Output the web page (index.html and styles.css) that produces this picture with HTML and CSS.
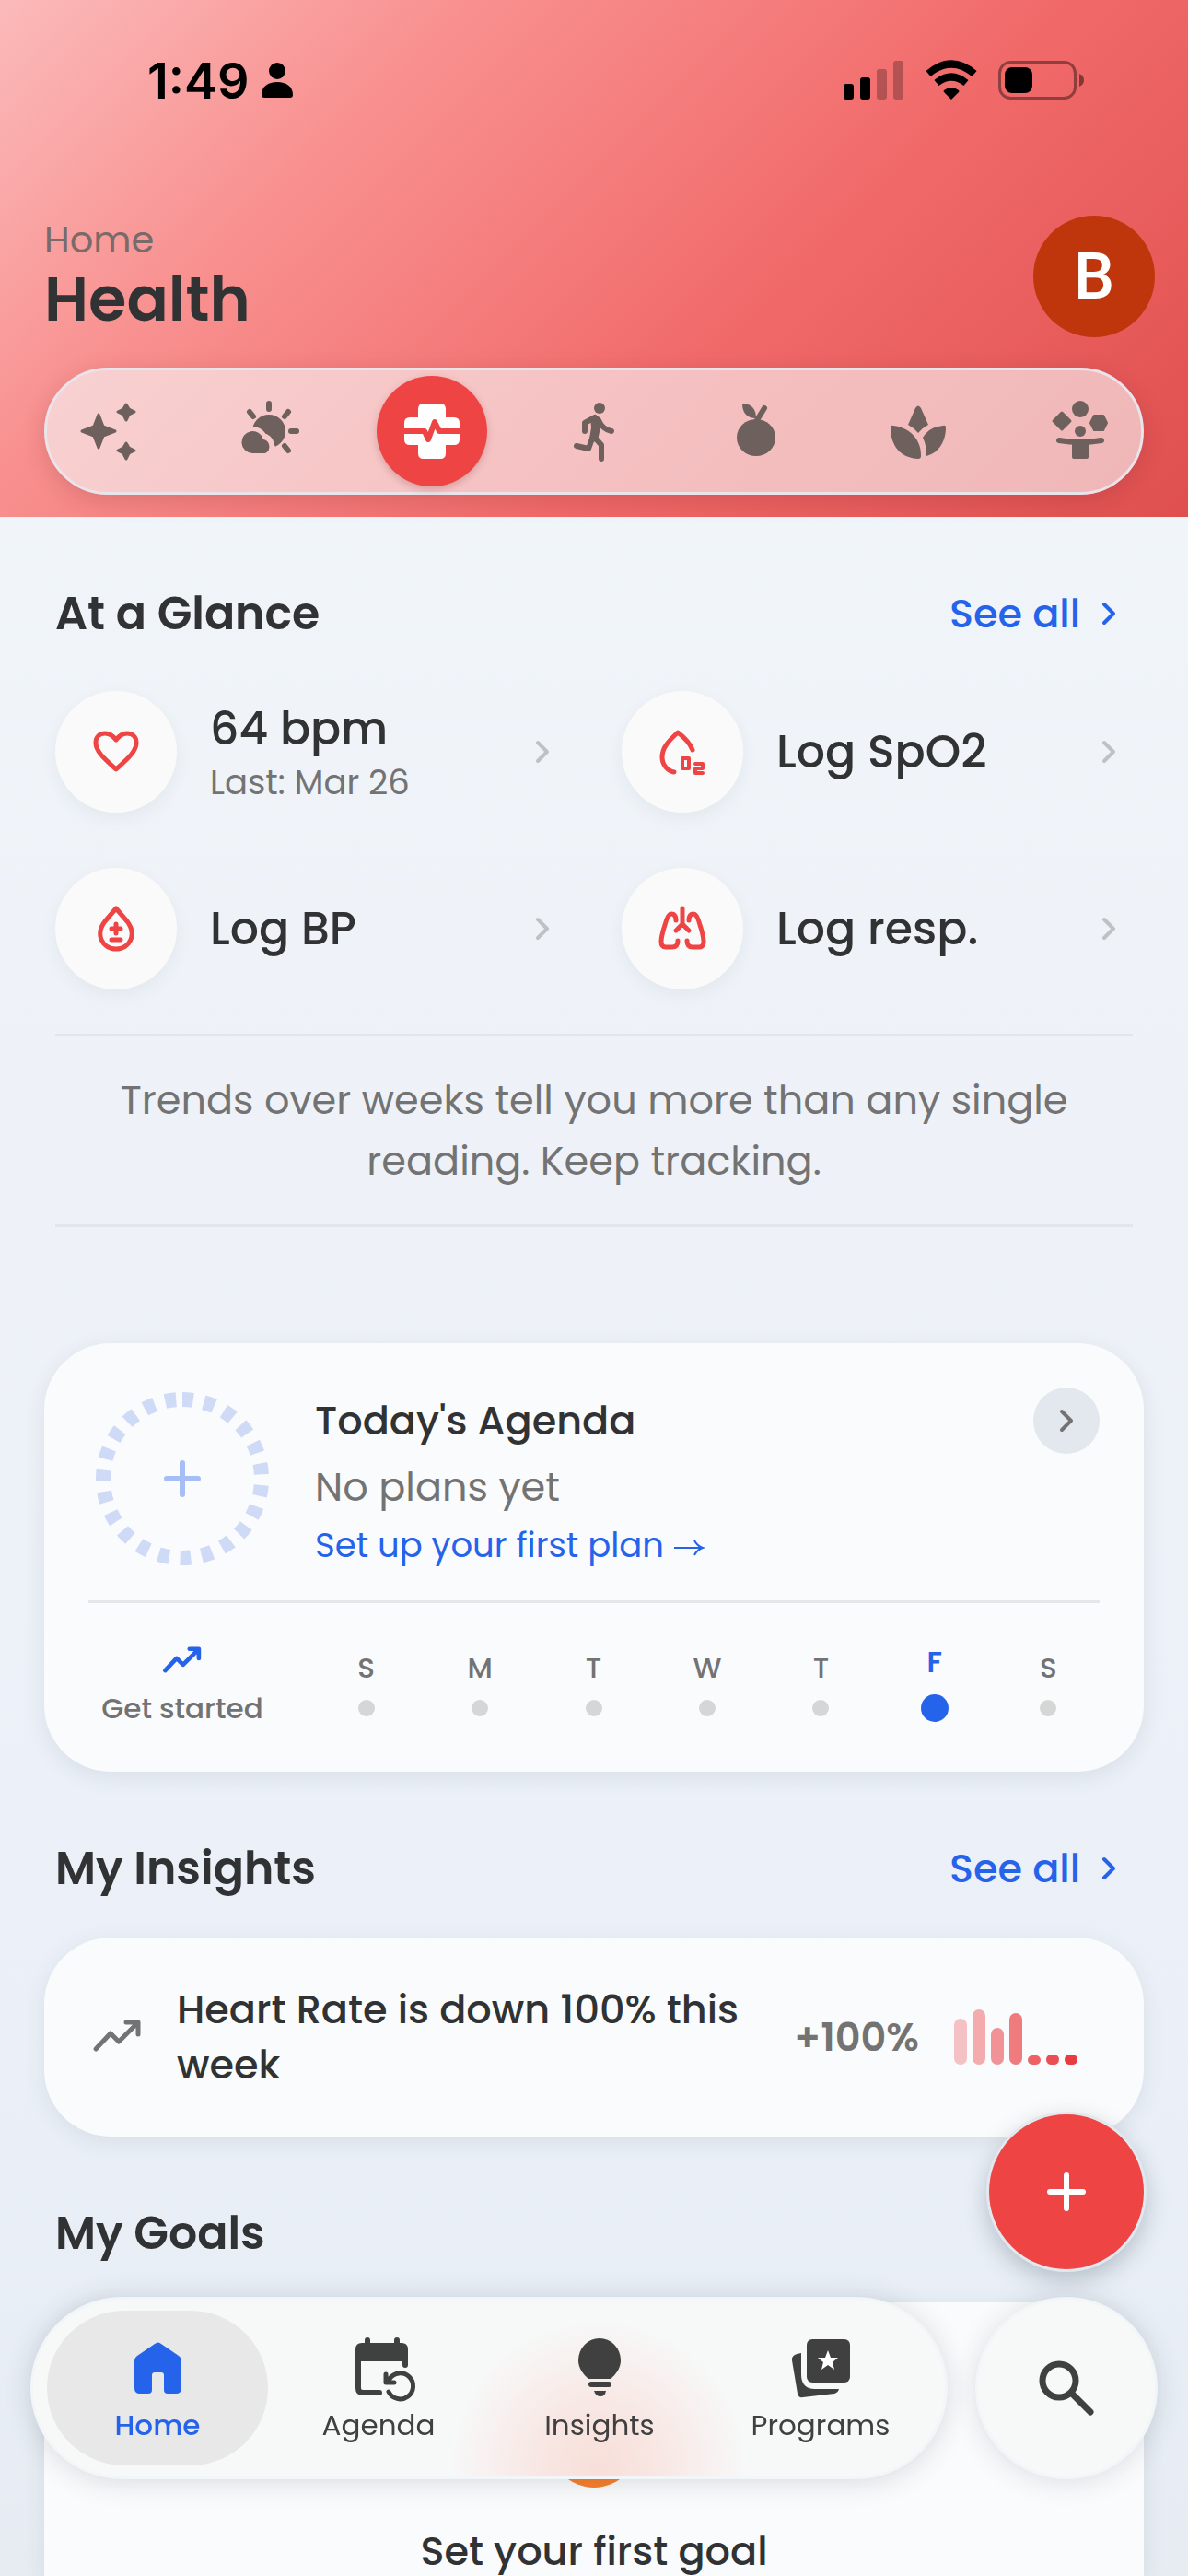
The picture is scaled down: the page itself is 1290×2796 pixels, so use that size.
FILE: index.html
```html
<!DOCTYPE html>
<html lang="en">
<head>
    <meta charset="UTF-8">
    <meta name="viewport" content="width=device-width, initial-scale=1.0">
    <title>Health</title>
    <link rel="stylesheet" href="styles.css">
</head>
<body>
    <header class="header">
        <div class="status-bar">
            <div class="clock">
                <span>1:49</span>
                <svg width="36" height="40" viewBox="0 0 36 40"><circle cx="18" cy="10" r="9"/><path d="M1 36C1 27 8 22 18 22s17 5 17 14q0 3-3 3H4q-3 0-3-3z"/></svg>
            </div>
            <div class="status-icons">
                <svg width="66" height="42" viewBox="0 0 66 42"><rect x="0" y="25" width="11" height="17" rx="3"/><rect x="18" y="18" width="11" height="24" rx="3"/><g opacity=".25"><rect x="36" y="9" width="11" height="33" rx="3"/><rect x="54" y="0" width="11" height="42" rx="3"/></g></svg>
                <svg width="58" height="42" viewBox="0 0 58 42"><path d="M29 42l-8-8q-1-1 0-2 8-6 16 0 1 1 0 2z"/><path d="M13 24q16-13 32 0M4 14q25-21 50 0" fill="none" stroke="#000" stroke-width="8"/></svg>
                <svg width="94" height="42" viewBox="0 0 94 42"><rect x="1.5" y="1.5" width="82" height="39" rx="12" fill="none" stroke="#000" stroke-opacity=".4" stroke-width="3"/><rect x="7" y="7" width="30" height="28" rx="8"/><path d="M88 14q5 2 5 7t-5 7z" opacity=".45"/></svg>
            </div>
        </div>
        <div class="title-row">
            <div>
                <p class="crumb">Home</p>
                <h1>Health</h1>
            </div>
            <button class="avatar" aria-label="Account">B</button>
        </div>
        <nav class="tabs" aria-label="Categories">
            <button class="tab" aria-label="Highlights">
                <svg viewBox="0 0 72 72"><g stroke="currentColor" stroke-width="3" stroke-linejoin="round"><path d="M26 18l5 13 13 5-13 5-5 13-5-13-13-5 13-5z"/><path d="M56 7l3 5 6 3-6 3-3 6-3-6-6-3 6-3zM56 49l3 5 6 3-6 3-3 6-3-6-6-3 6-3z"/></g></svg>
            </button>
            <button class="tab" aria-label="Daily">
                <svg viewBox="0 0 72 72">
                    <mask id="cloudGap"><rect width="72" height="72" fill="#fff"/><path d="M17 60a12 12 0 1 1 11-17a9 9 0 0 1 3 17z" fill="#000" stroke="#000" stroke-width="10"/><path d="M36 42l10 18H30z" fill="#000"/></mask>
                    <circle cx="35" cy="36" r="18" mask="url(#cloudGap)"/>
                    <path d="M17 60a12 12 0 1 1 12-15a8 8 0 0 1 2 15z"/>
                    <path d="M35 6v6M59 36h6M14 15l4 5M56 15l-4 5M56 57l-4-5" fill="none" stroke="currentColor" stroke-width="6" stroke-linecap="round"/>
                </svg>
            </button>
            <button class="tab active" aria-label="Health">
                <svg viewBox="0 0 72 72"><path d="M27 6h18q6 0 6 6v9h9q6 0 6 6v18q0 6-6 6h-9v9q0 6-6 6H27q-6 0-6-6v-9h-9q-6 0-6-6V27q0-6 6-6h9v-9q0-6 6-6z"/><path d="M5 36h23l4 9 7-19 5 10h23" fill="none" stroke="#ef4444" stroke-width="6" stroke-linejoin="round"/></svg>
            </button>
            <button class="tab" aria-label="Fitness">
                <svg viewBox="0 0 72 72"><circle cx="42" cy="11" r="6"/><path d="M32 21q6-4 10 0 3 5 1 11l-3 14-10 4 3-18z"/><path d="M37 21l-11 6v9M41 24q4 10 14 12M34 44l-4 11-13-3M36 42l8 9v15" fill="none" stroke="currentColor" stroke-width="6" stroke-linecap="round" stroke-linejoin="round"/></svg>
            </button>
            <button class="tab" aria-label="Nutrition">
                <svg viewBox="0 0 72 72"><ellipse cx="36" cy="43" rx="21" ry="20"/><path d="M21 6c10 0 15 6 15 16-10 0-15-6-15-16z"/><path d="M37 24l8-13" stroke="currentColor" stroke-width="6" stroke-linecap="round"/></svg>
            </button>
            <button class="tab" aria-label="Mindfulness">
                <svg viewBox="0 0 72 72"><path d="M33 11q3-5 6 0l8 18q-6 3-11 9-5-6-11-9z"/><path d="M6 32q0-3 3-2c19 2 31 17 30 33q0 3-3 3C16 65 6 51 6 32z"/><path d="M66 32q0-3-3-2c-10 1-17 5-22 13 3 6 4 12 4 20 14-4 21-16 21-31z"/></svg>
            </button>
            <button class="tab" aria-label="Balance">
                <svg viewBox="0 0 72 72"><circle cx="36" cy="12" r="9"/><path d="M16 16l9 9-9 9-9-9z" stroke="currentColor" stroke-width="3" stroke-linejoin="round"/><path d="M51 19h10l4 8-4 8H51l-4-8z" stroke="currentColor" stroke-width="2" stroke-linejoin="round"/><circle cx="36" cy="36" r="6"/><path d="M13 46q23 4 46 0" fill="none" stroke="currentColor" stroke-width="6" stroke-linecap="round"/><rect x="27" y="46" width="18" height="20" rx="2"/></svg>
            </button>
        </nav>
    </header>

    <main class="content">
        <div class="section-head">
            <h2>At a Glance</h2>
            <a class="see-all" href="#">See all <svg class="chevron" viewBox="0 0 15 24"><path d="M2 2l10 10L2 22"/></svg></a>
        </div>
        <div class="glance">
            <button class="metric">
                <span class="metric-icon"><svg viewBox="0 0 60 60"><path d="M30 49C18 38 8 30 8 20c0-7 5-10 10-10 6 0 9 3 12 7 3-4 6-7 12-7 5 0 10 3 10 10 0 10-10 18-22 29z"/></svg></span>
                <span class="metric-text has-note">64 bpm<small>Last: Mar 26</small></span>
                <svg class="chevron" viewBox="0 0 15 24"><path d="M2 2l10 10L2 22"/></svg>
            </button>
            <button class="metric">
                <span class="metric-icon"><svg viewBox="0 0 60 60"><path d="M41 28Q37 18 25 9C14 19 8 26 8 36c0 8 6 15 13 16"/><path d="M30 37h7v11h-7zM44 43h8v5h-8v5h8" stroke-width="4"/></svg></span>
                <span class="metric-text">Log SpO2</span>
                <svg class="chevron" viewBox="0 0 15 24"><path d="M2 2l10 10L2 22"/></svg>
            </button>
            <button class="metric">
                <span class="metric-icon"><svg viewBox="0 0 60 60"><path d="M30 8L18 22C7 36 15 52 30 52s23-16 12-30zM30 25v10M25 30h10M25 42h10"/></svg></span>
                <span class="metric-text">Log BP</span>
                <svg class="chevron" viewBox="0 0 15 24"><path d="M2 2l10 10L2 22"/></svg>
            </button>
            <button class="metric">
                <span class="metric-icon"><svg viewBox="0 0 60 60"><path d="M30 8v17l-7 7M30 25l7 7M23 21q0-7-5-7-4 0-7 12Q7 38 7 44q0 6 5 6h7q6 0 6-7M37 21q0-7 5-7 4 0 7 12 4 12 4 18 0 6-5 6h-7q-6 0-6-7"/></svg></span>
                <span class="metric-text">Log resp.</span>
                <svg class="chevron" viewBox="0 0 15 24"><path d="M2 2l10 10L2 22"/></svg>
            </button>
        </div>
        <p class="tip">Trends over weeks tell you more than any single reading. Keep tracking.</p>

        <section class="card agenda">
            <div class="agenda-top">
                <svg class="ring" viewBox="0 0 192 192"><circle cx="96" cy="96" r="86" pathLength="547" fill="none" stroke="#cfdaf7" stroke-width="16" stroke-dasharray="12 12" transform="rotate(-90 96 96)"/><path d="M96 79v34M79 96h34" stroke="#a6bdf5" stroke-width="6" stroke-linecap="round"/></svg>
                <div class="agenda-text">
                    <h3>Today's Agenda</h3>
                    <p>No plans yet</p>
                    <a href="#">Set up your first plan <svg width="34" height="18" viewBox="0 0 34 18"><path d="M1 9h31M23 1q3 6 9 8-6 2-9 8" fill="none" stroke="currentColor" stroke-width="2"/></svg></a>
                </div>
                <button class="round-btn" aria-label="Open agenda"><svg class="chevron" viewBox="0 0 15 24"><path d="M2 2l10 10L2 22"/></svg></button>
            </div>
            <div class="week">
                <div class="streak">
                    <svg width="42" height="42" viewBox="0 0 54 54"><path d="M3 40l16-17 9 9 21-21M37 10h13v13" fill="none" stroke="#2563eb" stroke-width="6" stroke-linecap="round" stroke-linejoin="round"/></svg>
                    <span>Get started</span>
                </div>
                <div class="day">S<i></i></div>
                <div class="day">M<i></i></div>
                <div class="day">T<i></i></div>
                <div class="day">W<i></i></div>
                <div class="day">T<i></i></div>
                <div class="day today">F<i></i></div>
                <div class="day">S<i></i></div>
            </div>
        </section>

        <div class="section-head">
            <h2>My Insights</h2>
            <a class="see-all" href="#">See all <svg class="chevron" viewBox="0 0 15 24"><path d="M2 2l10 10L2 22"/></svg></a>
        </div>
        <section class="card insight">
            <svg width="54" height="54" viewBox="0 0 54 54"><path d="M4 40l16-17 9 9 20-20M37 11h13v13" fill="none" stroke="#737373" stroke-width="5" stroke-linecap="round" stroke-linejoin="round"/></svg>
            <p>Heart Rate is down 100% this week</p>
            <strong>+100%</strong>
            <div class="bars">
                <span style="height:50px;opacity:.3"></span>
                <span style="height:60px;opacity:.42"></span>
                <span style="height:40px;opacity:.55"></span>
                <span style="height:56px;opacity:.67"></span>
                <span style="height:10px;opacity:.8"></span>
                <span style="height:11px;opacity:.9"></span>
                <span style="height:11px;opacity:1"></span>
            </div>
        </section>

        <div class="section-head">
            <h2>My Goals</h2>
        </div>
        <section class="card goals">
            <div class="goal-badge"></div>
            <h3>Set your first goal</h3>
        </section>
    </main>

    <button class="fab" aria-label="Add"><svg width="48" height="48" viewBox="0 0 48 48"><path d="M24 6v36M6 24h36" stroke="#fff" stroke-width="6" stroke-linecap="round"/></svg></button>

    <div class="bottom-nav">
        <nav class="nav-pill" aria-label="Main">
            <a class="nav-item active" href="#">
                <svg viewBox="0 0 72 72"><path d="M33 9q4-3 7 0l19 13q3 2 3 6v29q0 6-6 6h-9q-4 0-4-4V43q0-3-3-3h-7q-3 0-3 3v16q0 4-4 4h-9q-6 0-6-6V28q0-4 3-6z"/></svg>
                <span>Home</span>
            </a>
            <a class="nav-item" href="#">
                <svg viewBox="-8 0 72 72"><path d="M3 28V15q0-7 7-7h43q7 0 7 7v13z"/><path d="M6 24v33q0 5 5 5h18M57 26v6M16 5v6M48 5v6" fill="none" stroke="currentColor" stroke-width="6" stroke-linecap="round"/><path d="M39 61a14 14 0 1 0 1-14l-3 3M36 42v9h9" fill="none" stroke="currentColor" stroke-width="5" stroke-linecap="round" stroke-linejoin="round"/></svg>
                <span>Agenda</span>
            </a>
            <a class="nav-item" href="#">
                <svg viewBox="0 0 72 72"><path d="M36 3a23 24 0 0 1 23 24c0 8-5 15-11 20H24c-6-5-11-12-11-20A23 24 0 0 1 36 3z"/><rect x="24" y="50" width="25" height="6" rx="3"/><path d="M30 60h13q-1 6-6 6t-7-6z"/></svg>
                <span>Insights</span>
            </a>
            <a class="nav-item" href="#">
                <svg viewBox="0 0 72 72"><rect x="21" y="4" width="47" height="47" rx="6"/><path d="M44 16l3 8h8l-6 5 2 8-7-5-7 5 2-8-6-5h8z" fill="#fff"/><path d="M15 19v23q0 16 15 16h26q-1 4-5 5l-34 4q-5 1-6-4L5 27q-1-7 10-8z"/></svg>
                <span>Programs</span>
            </a>
        </nav>
        <button class="search" aria-label="Search"><svg width="72" height="72" viewBox="0 0 72 72"><path d="M46 28a18 18 0 1 1-36 0 18 18 0 1 1 36 0zM42 42l20 20" fill="none" stroke="#404040" stroke-width="7" stroke-linecap="round"/></svg></button>
    </div>
</body>
</html>
```
FILE: styles.css
```css
* {
    box-sizing: border-box;
}

body {
    font-family: Poppins, Inter, sans-serif;
    font-size: 43px;
    color: #303234;
    margin: 0;
    min-height: 100vh;
    display: flex;
    flex-direction: column;
    background: linear-gradient(#f2f7fb, #eef2f8 45%, #ebf0f8 80%, #e6ecf2);
}

h1, h2, h3, p {
    margin: 0;
}

a {
    color: #2563eb;
    text-decoration: none;
}

button {
    font: inherit;
    color: inherit;
    border: none;
    padding: 0;
    cursor: pointer;
}

svg {
    flex: none;
    overflow: visible;
}

/* header */
.header {
    padding: 60px 48px 24px;
    background: linear-gradient(135deg, #fbbaba, #f8908f 28%, #f16a6a 62%, #df4f4f);
}

.status-bar {
    display: flex;
    justify-content: space-between;
    align-items: center;
    height: 54px;
    padding: 0 64px 0 112px;
}

.clock {
    display: flex;
    align-items: center;
    gap: 12px;
    font-family: Inter, sans-serif;
    font-size: 54px;
    font-weight: 600;
    color: #000;
}

.status-icons {
    display: flex;
    gap: 22px;
}

.title-row {
    display: flex;
    justify-content: space-between;
    align-items: center;
    margin: 120px 0 33px;
}

.title-row .avatar {
    margin-right: -12px;
}

.crumb {
    font-size: 40px;
    line-height: 50px;
    color: #7a6a6a;
}

h1 {
    font-size: 67px;
    line-height: 80px;
    font-weight: 600;
}

.avatar {
    width: 132px;
    height: 132px;
    border-radius: 50%;
    background: #bf360c;
    color: #fff;
    font-family: Roboto, sans-serif;
    font-size: 70px;
    font-weight: 500;
}

.tabs {
    display: flex;
    justify-content: space-between;
    padding: 6px;
    border: 3px solid #e9e3ea;
    border-radius: 69px;
    background: rgba(248, 250, 252, 0.6);
    box-shadow: 0 6px 24px rgba(100, 30, 30, 0.18);
}

.tab {
    display: flex;
    justify-content: center;
    align-items: center;
    width: 120px;
    height: 120px;
    border-radius: 50%;
    background: none;
    color: #6e605d;
}

.tab svg {
    width: 72px;
    height: 72px;
    fill: currentColor;
}

.tab.active {
    background: #ef4444;
    color: #fff;
    box-shadow: 0 3px 9px rgba(80, 0, 0, 0.2);
}

/* content */
.content {
    flex: 1;
    display: flex;
    flex-direction: column;
    padding: 0 48px;
}

.section-head {
    display: flex;
    justify-content: space-between;
    align-items: center;
    margin: 75px 12px 45px;
    line-height: 60px;
}

h2 {
    font-size: 49px;
    font-weight: 600;
}

.see-all {
    display: flex;
    align-items: center;
    gap: 24px;
    padding-right: 18px;
    font-weight: 500;
}

.chevron {
    width: 15px;
    height: 24px;
    fill: none;
    stroke: currentColor;
    stroke-width: 4;
    stroke-linecap: round;
    stroke-linejoin: round;
}

.glance {
    display: grid;
    grid-template-columns: 1fr 1fr;
    gap: 60px;
    padding: 9px 12px 48px;
}

.metric {
    display: flex;
    align-items: center;
    gap: 36px;
    padding-right: 18px;
    background: none;
    text-align: left;
}

.metric .chevron {
    color: #bfc2c5;
}

.metric-icon {
    display: flex;
    justify-content: center;
    align-items: center;
    width: 132px;
    height: 132px;
    border-radius: 50%;
    background: #fafafa;
    box-shadow: 0 6px 18px rgba(30, 50, 70, 0.06);
}

.metric-icon svg {
    width: 60px;
    height: 60px;
    fill: none;
    stroke: #ee4444;
    stroke-width: 5;
    stroke-linecap: round;
    stroke-linejoin: round;
}

.metric-text {
    flex: 1;
    font-size: 49px;
    line-height: 60px;
    font-weight: 500;
}

.metric-text.has-note {
    line-height: 66px;
}

.metric-text small {
    display: block;
    font-size: 37px;
    line-height: 50px;
    font-weight: 400;
    color: #737373;
}

.tip {
    margin: 0 12px 126px;
    padding: 36px 60px;
    border: solid #e2e6ec;
    border-width: 3px 0;
    line-height: 66px;
    text-align: center;
    color: #737373;
}

.card {
    border-radius: 72px;
    background: #fafbfc;
    box-shadow: 0 6px 24px rgba(30, 50, 70, 0.09);
}

h3 {
    font-size: 43px;
    font-weight: 500;
}

/* agenda */
.agenda {
    padding: 48px 42px 51px;
}

.agenda-top {
    display: flex;
    align-items: center;
    gap: 48px;
    margin: 0 6px;
    padding: 0 0 33px 6px;
    border-bottom: 3px solid #e3e7ea;
}

.ring {
    width: 192px;
    height: 192px;
}

.agenda-text {
    flex: 1;
    line-height: 72px;
}

.agenda-text p {
    color: #737373;
}

.agenda-text a {
    display: block;
    font-size: 37px;
    line-height: 54px;
}

.agenda-text a svg {
    vertical-align: middle;
}

.round-btn {
    display: flex;
    justify-content: center;
    align-items: center;
    align-self: flex-start;
    width: 72px;
    height: 72px;
    border-radius: 50%;
    background: #e3e8ef;
    color: #737373;
}

.week {
    display: flex;
    align-items: center;
    padding-top: 42px;
    font-size: 31px;
    line-height: 36px;
    font-weight: 500;
    color: #737373;
}

.streak {
    display: flex;
    flex-direction: column;
    align-items: center;
    gap: 12px;
    width: 216px;
    margin-right: 30px;
}

.day {
    flex: 1;
    display: flex;
    flex-direction: column;
    align-items: center;
    gap: 17px;
}

.day i {
    width: 18px;
    height: 18px;
    border-radius: 50%;
    background: #d6d6d6;
}

.day.today {
    color: #2563eb;
    font-weight: 600;
}

.day.today i {
    width: 30px;
    height: 30px;
    background: #2563eb;
}

/* insights */
.insight {
    display: flex;
    align-items: center;
    gap: 38px;
    padding: 48px 72px 48px 52px;
    line-height: 60px;
}

.insight p {
    flex: 1;
    font-weight: 500;
}

.insight strong {
    font-weight: 600;
    color: #737373;
}

.bars {
    display: flex;
    align-items: flex-end;
    gap: 6px;
    height: 60px;
}

.bars span {
    width: 14px;
    border-radius: 7px;
    background: #e93c41;
}

/* goals */
.goals {
    flex: 1;
    padding-top: 105px;
    border-radius: 72px 72px 0 0;
    text-align: center;
}

.goals h3 {
    line-height: 54px;
}

.goal-badge {
    width: 96px;
    height: 96px;
    margin: 0 auto 42px;
    border-radius: 50%;
    background: #f97f2b;
}

/* floating controls */
.fab {
    position: fixed;
    right: 45px;
    bottom: 330px;
    display: flex;
    justify-content: center;
    align-items: center;
    width: 174px;
    height: 174px;
    border: 3px solid #e3e8ee;
    border-radius: 50%;
    background: #ef4444;
    box-shadow: 0 9px 24px rgba(30, 50, 70, 0.25);
}

.bottom-nav {
    position: fixed;
    left: 33px;
    right: 33px;
    bottom: 105px;
    display: flex;
    gap: 30px;
}

.nav-pill {
    flex: 1;
    display: flex;
    padding: 12px 15px;
    border: 3px solid #f3f6f8;
    border-radius: 99px;
    background: radial-gradient(circle at 62% 95%, #f8dfd9, #f8e6e2 60px, rgba(248, 235, 232, 0) 160px), #f7f8f8;
    box-shadow: 0 3px 30px rgba(30, 50, 70, 0.16);
}

.nav-item {
    flex: 1;
    display: flex;
    flex-direction: column;
    align-items: center;
    gap: 6px;
    padding: 27px 0 24px;
    border-radius: 84px;
    font-size: 31px;
    line-height: 39px;
    color: #404040;
}

.nav-item svg {
    width: 72px;
    height: 72px;
    fill: currentColor;
}

.nav-item.active {
    background: #e8e8e8;
    color: #2563eb;
    font-weight: 500;
}

.search {
    display: flex;
    justify-content: center;
    align-items: center;
    width: 198px;
    height: 198px;
    border: 3px solid #f3f6f8;
    border-radius: 50%;
    background: #f7f8f8;
    box-shadow: 0 3px 30px rgba(30, 50, 70, 0.14);
}
```
